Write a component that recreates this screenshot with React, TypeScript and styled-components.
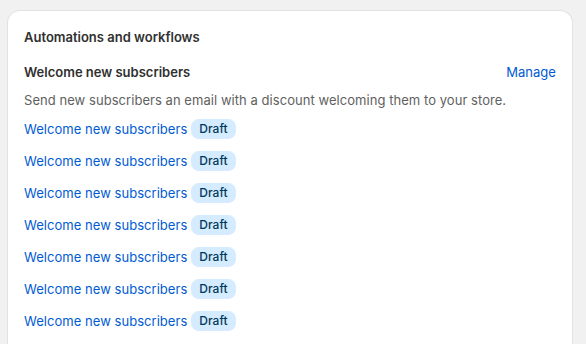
import styled, { createGlobalStyle } from "styled-components";

const GlobalStyle = createGlobalStyle`
  body {
    margin: 0;
    background: #f1f1f1;
    font-family: Inter, "Noto Sans", sans-serif;
    font-size: 13px;
    line-height: 20px;
    color: #303030;
    overflow: hidden;
  }
`

const Page = styled.div`
  height: 344px;
  overflow: hidden;
  padding: 11px 14px 0 8px;
  box-sizing: border-box;
`
const Card = styled.section`
  background: #fff;
  border-radius: 12px;
  box-shadow: 0 1px 0 0 rgba(26,26,26,.07), 0 0 0 1px rgba(0,0,0,.06);
  padding: 16px;
  display: flex;
  flex-direction: column;
  gap: 15px;
  min-height: 330px;
`
const Title = styled.h2`
  margin: 0;
  font-size: 13px;
  font-weight: 600;
  line-height: 20px;
  color: #303030;
`
const Section = styled.div`
  display: flex;
  flex-direction: column;
  gap: 8px;
`
const HeaderRow = styled.div`
  display: flex;
  justify-content: space-between;
  align-items: center;
`
const SubTitle = styled.h3`
  margin: 0;
  font-size: 13px;
  font-weight: 600;
  line-height: 20px;
`
const Link = styled.a`
  color: #005bd3;
  text-decoration: none;
  letter-spacing: 0.04px;
  cursor: pointer;
`
const Description = styled.p`
  margin: 0;
  color: #616161;
  letter-spacing: 0.05px;
`
const List = styled.ul`
  list-style: none;
  margin: 1px 0 0;
  padding: 0;
  display: flex;
  flex-direction: column;
  gap: 12px;
`
const Item = styled.li`
  display: flex;
  align-items: center;
  gap: 4px;
  height: 20px;
`
const Badge = styled.span`
  display: inline-flex;
  align-items: center;
  height: 20px;
  padding: 0 8px;
  border-radius: 8px;
  background: #d5ebff;
  color: #003a5a;
  font-size: 12px;
  font-weight: 500;
`

const flows = Array.from({ length: 7 }, () => "Welcome new subscribers")

export default function App() {
  return (
    <>
      <GlobalStyle />
      <Page>
        <Card>
          <Title>Automations and workflows</Title>
          <Section>
            <HeaderRow>
              <SubTitle>Welcome new subscribers</SubTitle>
              <Link>Manage</Link>
            </HeaderRow>
            <Description>
              Send new subscribers an email with a discount welcoming them to your store.
            </Description>
            <List>
              {flows.map((name, i) => (
                <Item key={i}>
                  <Link>{name}</Link>
                  <Badge>Draft</Badge>
                </Item>
              ))}
            </List>
          </Section>
        </Card>
      </Page>
    </>
  )
}
